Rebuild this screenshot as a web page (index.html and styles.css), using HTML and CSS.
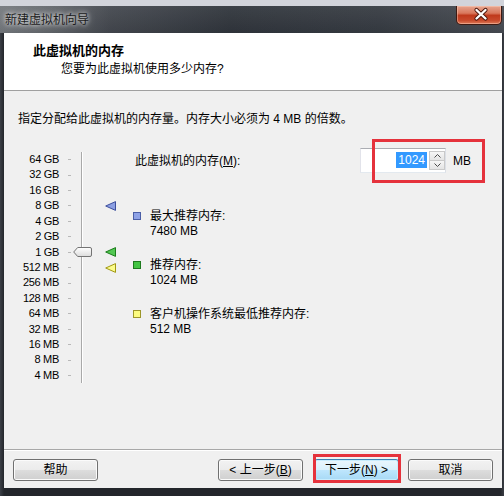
FILE: index.html
```html
<!DOCTYPE html>
<html lang="zh-CN">
<head>
<meta charset="utf-8">
<title>新建虚拟机向导</title>
<link rel="stylesheet" href="styles.css">
</head>
<body>
<div class="window">
  <div class="topstrip"></div>
  <div class="titlebar">
    <span class="wtitle">新建虚拟机向导</span>
    <div class="close">
      <svg width="46" height="19" viewBox="0 0 46 19">
        <path d="M20.5 5 L29.5 13.5 M29.5 5 L20.5 13.5" stroke="#4a160c" stroke-width="4.2" stroke-linecap="round"/>
        <path d="M20.5 5 L29.5 13.5 M29.5 5 L20.5 13.5" stroke="#ffffff" stroke-width="2.4" stroke-linecap="round"/>
      </svg>
    </div>
  </div>
  <div class="client">
    <div class="header">
      <div class="h-title">此虚拟机的内存</div>
      <div class="h-sub">您要为此虚拟机使用多少内存?</div>
    </div>
    <div class="body">
      <p class="intro">指定分配给此虚拟机的内存量。内存大小必须为 4 MB 的倍数。</p>
      <div class="main">
        <div class="scale">
          <span class="lbl">64 GB</span><i class="tick"></i><i class="trk"></i><i class="mk"></i>
          <span class="lbl">32 GB</span><i class="tick"></i><i class="trk"></i><i class="mk"></i>
          <span class="lbl">16 GB</span><i class="tick"></i><i class="trk"></i><i class="mk"></i>
          <span class="lbl">8 GB</span><i class="tick"></i><i class="trk"></i><i class="mk">
            <svg width="11" height="10" viewBox="0 0 11 10"><polygon points="0.7,5 10.5,0.6 10.5,9.4" fill="#8c9fe2" stroke="#3d4f9c" stroke-width="1" stroke-linejoin="round"/></svg>
          </i>
          <span class="lbl">4 GB</span><i class="tick"></i><i class="trk"></i><i class="mk"></i>
          <span class="lbl">2 GB</span><i class="tick"></i><i class="trk"></i><i class="mk"></i>
          <span class="lbl">1 GB</span><i class="tick"></i><i class="trk">
            <svg class="thumb" width="19" height="10" viewBox="0 0 19 10">
              <defs><linearGradient id="tg" x1="0" y1="0" x2="0" y2="1"><stop offset="0" stop-color="#ffffff"/><stop offset="1" stop-color="#dcdcdc"/></linearGradient></defs>
              <path d="M0.7 5 L4.7 0.5 H17 Q18.5 0.5 18.5 2 V8 Q18.5 9.5 17 9.5 H4.7 Z" fill="url(#tg)" stroke="#747474" stroke-width="1"/>
            </svg>
          </i><i class="mk">
            <svg width="11" height="10" viewBox="0 0 11 10"><polygon points="0.7,5 10.5,0.6 10.5,9.4" fill="#52c852" stroke="#1d7c1d" stroke-width="1" stroke-linejoin="round"/></svg>
          </i>
          <span class="lbl">512 MB</span><i class="tick"></i><i class="trk"></i><i class="mk">
            <svg width="11" height="10" viewBox="0 0 11 10"><polygon points="0.7,5 10.5,0.6 10.5,9.4" fill="#fbfb8a" stroke="#a09814" stroke-width="1" stroke-linejoin="round"/></svg>
          </i>
          <span class="lbl">256 MB</span><i class="tick"></i><i class="trk"></i><i class="mk"></i>
          <span class="lbl">128 MB</span><i class="tick"></i><i class="trk"></i><i class="mk"></i>
          <span class="lbl">64 MB</span><i class="tick"></i><i class="trk"></i><i class="mk"></i>
          <span class="lbl">32 MB</span><i class="tick"></i><i class="trk"></i><i class="mk"></i>
          <span class="lbl">16 MB</span><i class="tick"></i><i class="trk"></i><i class="mk"></i>
          <span class="lbl">8 MB</span><i class="tick"></i><i class="trk"></i><i class="mk"></i>
          <span class="lbl">4 MB</span><i class="tick"></i><i class="trk"></i><i class="mk"></i>
        </div>
        <div class="panel">
          <div class="memrow">
            <span class="memlbl">此虚拟机的内存(<u>M</u>):</span>
            <div class="spin">
              <span class="sel">1024</span>
              <span class="arrows">
                <span class="arr"><svg width="7" height="4" viewBox="0 0 7 4"><path d="M0.5 3.5 L3.5 0.5 L6.5 3.5" fill="none" stroke="#4a4a4a" stroke-width="1"/></svg></span>
                <span class="arr"><svg width="7" height="4" viewBox="0 0 7 4"><path d="M0.5 0.5 L3.5 3.5 L6.5 0.5" fill="none" stroke="#4a4a4a" stroke-width="1"/></svg></span>
              </span>
            </div>
            <span class="unit">MB</span>
            <div class="mark mark-input"></div>
          </div>
          <div class="legend">
            <div class="item"><i class="sq sq-blue"></i><div><div>最大推荐内存:</div><div>7480 MB</div></div></div>
            <div class="item"><i class="sq sq-green"></i><div><div>推荐内存:</div><div>1024 MB</div></div></div>
            <div class="item"><i class="sq sq-yellow"></i><div><div>客户机操作系统最低推荐内存:</div><div>512 MB</div></div></div>
          </div>
        </div>
      </div>
    </div>
    <div class="footer">
      <button class="btn">帮助</button>
      <button class="btn back">&lt; 上一步(<u>B</u>)</button>
      <button class="btn next">下一步(<u>N</u>) &gt;<span class="mark mark-next"></span></button>
      <button class="btn cancel">取消</button>
    </div>
  </div>
  <div class="bottomframe"></div>
</div>
</body>
</html>
```
FILE: styles.css
```css
html, body {
  margin: 0;
  padding: 0;
}
body {
  background: #2a2d33;
  font-family: "Liberation Sans", "Noto Sans CJK SC", sans-serif;
  font-size: 12px;
  color: #000;
}
.window {
  width: 504px;
  height: 496px;
  display: flex;
  flex-direction: column;
  background: linear-gradient(to right, #3b3f46 0, #23262b 4px, #23262b 500px, #3a3d44 100%);
  overflow: hidden;
}
.topstrip {
  height: 6px;
  flex: none;
  background: #d2d4db;
}
.titlebar {
  height: 27px;
  flex: none;
  display: flex;
  align-items: center;
  justify-content: space-between;
  padding: 0 2px 0 5px;
  background:
    linear-gradient(rgba(255,255,255,0.06), rgba(0,0,0,0.05)),
    linear-gradient(to right, #74787d 0, #62666b 50px, #43474e 110px, #30353c 230px, #363b42 380px, #474b52 100%);
}
.wtitle {
  color: #1c1c1c;
  line-height: 16px;
  margin-top: 1px;
  text-shadow: 0 0 4px rgba(255,255,255,0.95), 0 0 8px rgba(255,255,255,0.6);
}
.close {
  align-self: flex-start;
  width: 46px;
  height: 19px;
  box-sizing: border-box;
  border: 1px solid #3e1a12;
  border-top: none;
  border-radius: 0 0 5px 5px;
  background: linear-gradient(#e6a590 0%, #d9785c 40%, #c03a1c 52%, #c84a2c 80%, #dd7a58 100%);
  box-shadow: inset 0 0 0 1px rgba(255,210,190,0.45);
}
.close svg {
  display: block;
  margin: -1px 0 0 -1px;
}
.client {
  flex: 1;
  margin: 0 2px 0 4px;
  background: #f0f0f0;
  display: flex;
  flex-direction: column;
  min-height: 0;
}
.header {
  height: 58px;
  flex: none;
  box-sizing: border-box;
  background: #fff;
  border-bottom: 1px solid #a0a0a0;
  padding: 10px 0 0 29px;
}
.h-title {
  font-weight: bold;
  font-size: 13px;
  line-height: 16px;
}
.h-sub {
  margin: 2px 0 0 28px;
  line-height: 16px;
}
.body {
  flex: 1;
  padding: 20px 0 0 14px;
}
.intro {
  margin: 0;
  line-height: 16px;
}
.main {
  display: flex;
  margin-top: 21px;
}
.scale {
  display: grid;
  grid-template-columns: 41px 13px 21px 27px;
  grid-auto-rows: 15.43px;
  padding-top: 4px;
  align-content: start;
}
.lbl {
  text-align: right;
  font-size: 11px;
  letter-spacing: -0.3px;
  line-height: 15.43px;
  white-space: nowrap;
}
.tick {
  background: linear-gradient(#b8b8b8, #b8b8b8) no-repeat 9px 50% / 3px 1px;
}
.trk {
  display: flex;
  align-items: center;
  background: linear-gradient(to right, #a9a9a9 0 1px, #ffffff 1px 2px) no-repeat 9px 0 / 2px 100%;
}
.thumb {
  display: block;
  margin-left: 1px;
}
.mk {
  display: flex;
  align-items: center;
  padding-left: 12px;
}
.mk svg {
  display: block;
}
.panel {
  margin-left: 13px;
}
.memrow {
  position: relative;
  display: flex;
  align-items: center;
  height: 25px;
}
.memlbl {
  width: 227px;
  padding-left: 2px;
  box-sizing: border-box;
  line-height: 16px;
}
.spin {
  width: 86px;
  height: 25px;
  box-sizing: border-box;
  border: 1px solid #abadb3;
  border-color: #abadb3 #dbdfe6 #e3e9ef #e2e3ea;
  background: #fff;
  display: flex;
  align-items: center;
  justify-content: flex-end;
}
.sel {
  background: #3399ff;
  color: #fff;
  padding: 0 2px;
  line-height: 16px;
  margin-top: -2px;
}
.arrows {
  width: 16px;
  height: 19px;
  margin-left: 2px;
  display: flex;
  flex-direction: column;
}
.arr {
  flex: 1;
  display: flex;
  align-items: center;
  justify-content: center;
  box-sizing: border-box;
  border: 1px solid #c9c9c9;
  background: linear-gradient(#f6f6f6, #e4e4e4);
}
.arr + .arr {
  border-top: none;
}
.arr svg {
  display: block;
}
.unit {
  margin-left: 7px;
  line-height: 16px;
}
.mark {
  position: absolute;
  box-sizing: border-box;
  border: 3px solid #e5323c;
  pointer-events: none;
}
.mark-input {
  left: 239px;
  top: -9px;
  width: 113px;
  height: 44px;
}
.legend {
  margin-top: 36px;
  display: flex;
  flex-direction: column;
  gap: 19px;
}
.item {
  display: flex;
  align-items: flex-start;
  line-height: 15px;
}
.sq {
  width: 8px;
  height: 8px;
  flex: none;
  box-sizing: border-box;
  margin: 3px 9px 0 0;
  border: 1px solid;
}
.sq-blue {
  background: #8ea2e6;
  border-color: #4a5ea6;
}
.sq-green {
  background: #43c443;
  border-color: #1e7a1e;
}
.sq-yellow {
  background: #fcfc80;
  border-color: #9c962a;
}
.footer {
  height: 39px;
  flex: none;
  box-sizing: border-box;
  border-top: 1px solid #a8a8a8;
  box-shadow: inset 0 1px 0 #ffffff;
  display: flex;
  align-items: flex-start;
  padding: 9px 9px 0 9px;
}
.btn {
  position: relative;
  width: 85px;
  height: 22px;
  padding: 0;
  font: inherit;
  color: #000;
  line-height: 18px;
  border: 1px solid #707070;
  border-radius: 3px;
  background: linear-gradient(#f2f2f2 0%, #ebebeb 50%, #dddddd 51%, #cfcfcf 100%);
  box-shadow: inset 0 0 0 1px #fbfbfb;
}
.back {
  margin-left: auto;
}
.next {
  margin-left: 11px;
  border-color: #3c7fb1;
  background: linear-gradient(#eaf6fd 0%, #d9f0fc 50%, #bee6fd 51%, #a7d9f5 100%);
  box-shadow: inset 0 0 0 1px #c8ecfd;
}
.cancel {
  margin-left: 9px;
}
.mark-next {
  left: -2px;
  top: -6px;
  width: 88px;
  height: 29px;
}
.bottomframe {
  height: 8px;
  flex: none;
}
```
